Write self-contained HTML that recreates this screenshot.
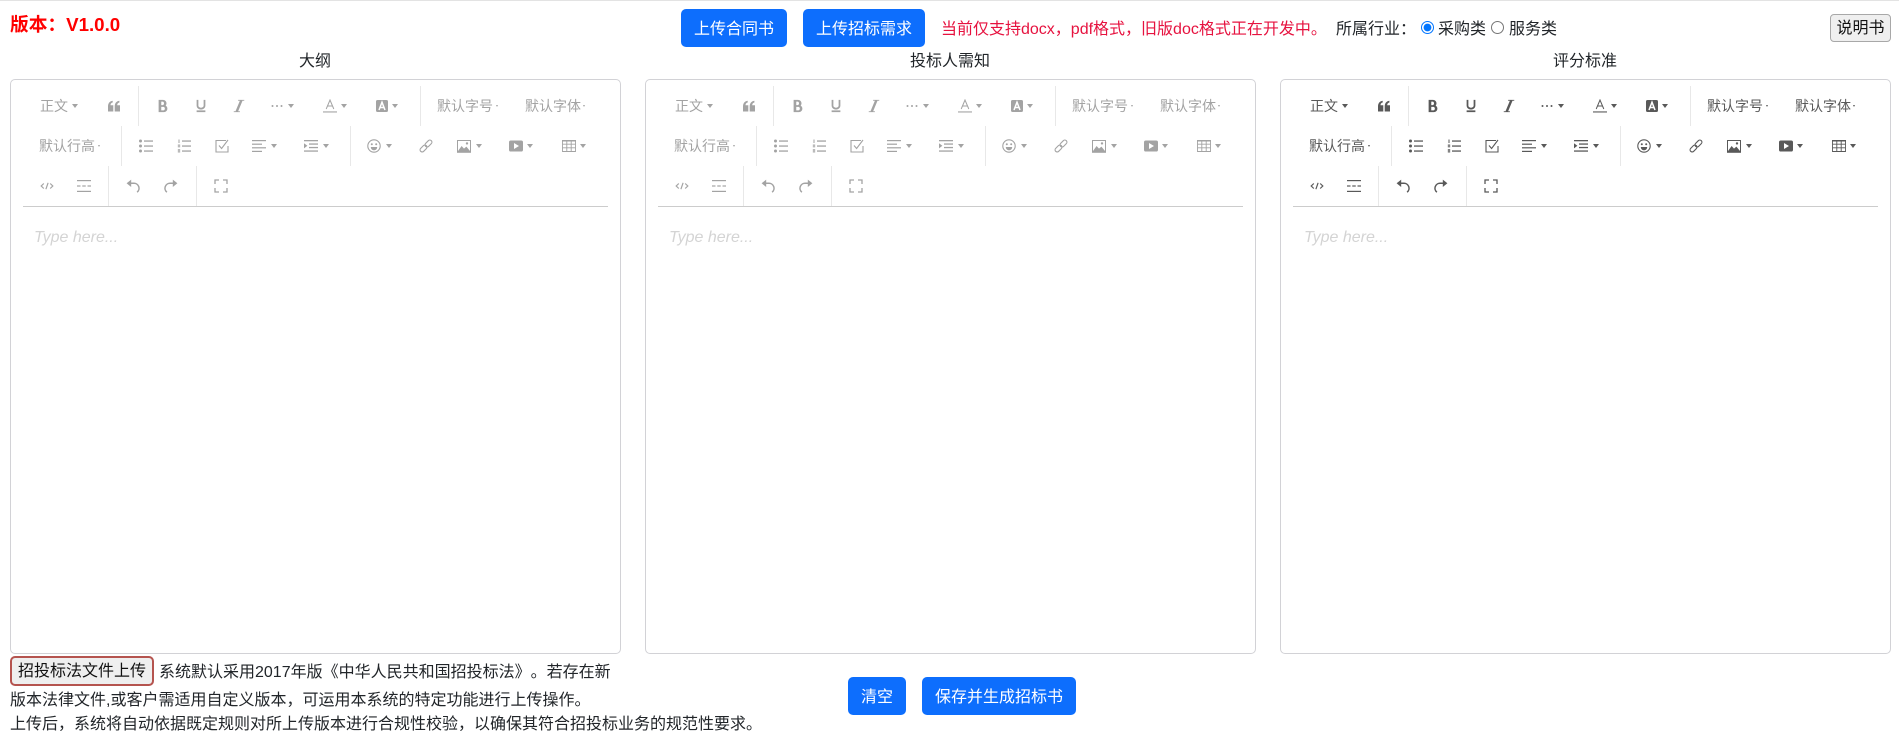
<!DOCTYPE html>
<html lang="zh-CN"><head><meta charset="utf-8"><title>招标书</title>
<style>
html,body{margin:0;padding:0;width:1899px;height:743px;overflow:hidden;background:#fff}
body{position:relative;font-family:"Liberation Sans","Noto Sans CJK SC",sans-serif;font-size:16px;color:#212529;text-spacing-trim:space-all}
.a{position:absolute;white-space:nowrap;line-height:24px}
.btn{position:absolute;height:38px;box-sizing:border-box;background:#0d6efd;border:1px solid #0d6efd;border-radius:5px;color:#fff;font:16px/24px "Liberation Sans","Noto Sans CJK SC",sans-serif;padding:8px 12px 4px;white-space:nowrap}
.nb{position:absolute;box-sizing:border-box;background:#efefef;font:16px/20px "Liberation Sans","Noto Sans CJK SC",sans-serif;color:#111;white-space:nowrap;padding:1px 0 0;text-align:center;text-spacing-trim:space-all}
.card{position:absolute;top:79px;width:611px;height:575px;color:#a3a3a3}
.card.on{color:#595959}
.bd{position:absolute;inset:0;border:1px solid #d2d2d6;border-radius:5px;box-sizing:border-box}
.line{position:absolute;left:13px;width:585px;top:127px;height:1px;background:#ccc}
.dv{position:absolute;width:1px;height:40px;background:#e8e8e8}
.d1{top:7px}.d2{top:47px}.d3{top:87px}
.t{position:absolute;font-size:14px;line-height:20px;white-space:nowrap}
.t1{top:17px}.t2{top:57px}
svg.i{position:absolute;width:14px;height:14px}
.r1{top:20px}.r2{top:60px}.r3{top:100px}
.c{position:absolute;width:0;height:0;border-left:3px solid transparent;border-right:3px solid transparent;border-top:4px solid currentColor}
.c1{top:25px}.c2{top:65px}
.o{position:absolute;width:0;height:0;border-left:1.5px solid transparent;border-right:1.5px solid transparent;border-top:2px solid currentColor}
.o1{top:26px}.o2{top:66px}
.ph{position:absolute;left:24px;top:147px;font-size:16px;line-height:24px;font-style:italic;color:#d4d4d4;white-space:nowrap}
input[type=radio]{position:absolute;margin:0;width:13px;height:13px}
</style></head><body>
<svg width="0" height="0" style="position:absolute"><defs>
<symbol id="q" viewBox="0 0 14 14"><path fill="currentColor" d="M1 12.5V7.5C1 4.500 2.500 2.300 5.700 1.800v1.700C4.100 3.900 3.500 5 3.500 6.300H6.300v6.200zM7.700 12.500V7.500c0-3 1.500-5.200 4.700-5.700v1.700c-1.600.4-2.200 1.500-2.200 2.800H13v6.200z"/></symbol>
<symbol id="b" viewBox="0 0 1024 1024"><path fill="currentColor" d="M707.872 484.64A254.88 254.88 0 0 0 768 320c0-141.152-114.848-256-256-256H192v896h384c141.152 0 256-114.848 256-256a256.096 256.096 0 0 0-124.128-219.36zM384 192h101.504c55.968 0 101.504 57.408 101.504 128s-45.536 128-101.504 128H384V192z m159.008 640H384v-256h159.008c58.464 0 106.016 57.408 106.016 128s-47.552 128-106.016 128z"/></symbol>
<symbol id="u" viewBox="0 0 1024 1024"><path fill="currentColor" d="M704 64l128 0 0 416c0 159.072-143.264 288-320 288s-320-128.928-320-288l0-416 128 0 0 416c0 40.16 18.24 78.688 51.36 108.512 36.896 33.216 86.848 51.488 140.64 51.488s103.744-18.304 140.64-51.488c33.12-29.792 51.36-68.352 51.36-108.512l0-416zM192 832l640 0 0 128-640 0z"/></symbol>
<symbol id="it" viewBox="0 0 1024 1024"><path fill="currentColor" d="M896 64v64h-128L448 896h128v64H128v-64h128L576 128h-128V64z"/></symbol>
<symbol id="m" viewBox="0 0 14 14"><g fill="currentColor"><circle cx="2.500" cy="7" r="1"/><circle cx="7" cy="7" r="1"/><circle cx="11.500" cy="7" r="1"/></g></symbol>
<symbol id="ca" viewBox="0 0 14 14"><path fill="none" stroke="currentColor" stroke-width="1" d="M3.200 10L7 1l3.800 9M4.500 7h5"/><rect x="0" y="12.400" width="14" height="1.100" fill="currentColor"/></symbol>
<symbol id="ba" viewBox="0 0 14 14"><rect x="1" y="1" width="12" height="12" rx="1.600" fill="currentColor"/><path fill="none" stroke="#fff" stroke-width="1.500" d="M4 11L7 3.200 10 11M5 8.500h4"/></symbol>
<symbol id="l" viewBox="0 0 14 14"><g fill="currentColor"><circle cx="1.500" cy="2" r="1.500"/><circle cx="1.500" cy="7" r="1.500"/><circle cx="1.500" cy="12" r="1.500"/><rect x="5" y="1.400" width="9" height="1.300"/><rect x="5" y="6.400" width="9" height="1.300"/><rect x="5" y="11.400" width="9" height="1.300"/></g></symbol>
<symbol id="n" viewBox="0 0 14 14"><g fill="currentColor"><rect x="1.500" y=".5" width="1" height="3.500"/><rect x=".8" y="5.400" width="2.400" height="3" opacity=".75"/><rect x=".8" y="10" width="2.400" height="3.600" opacity=".75"/><rect x="5" y="1.400" width="9" height="1.300"/><rect x="5" y="6.400" width="9" height="1.300"/><rect x="5" y="11.400" width="9" height="1.300"/></g></symbol>
<symbol id="td" viewBox="0 0 14 14"><path fill="none" stroke="currentColor" stroke-width="1.100" d="M13 7v6H1V1.500h10M4 6.500l2.600 3L13 1"/></symbol>
<symbol id="al" viewBox="0 0 14 14"><g fill="currentColor"><rect y="1" width="14" height="1.200"/><rect y="4.600" width="10" height="1.200"/><rect y="8.200" width="14" height="1.200"/><rect y="11.800" width="10" height="1.200"/></g></symbol>
<symbol id="id" viewBox="0 0 14 14"><g fill="currentColor"><rect y="1" width="14" height="1.300"/><rect x="5" y="4.400" width="9" height="1.300"/><rect x="5" y="7.900" width="9" height="1.300"/><rect y="11.400" width="14" height="1.300"/><path d="M0 4.200l3.400 2.600L0 9.400z"/></g></symbol>
<symbol id="s" viewBox="0 0 14 14"><circle cx="7" cy="7" r="6.200" fill="none" stroke="currentColor" stroke-width="1.100"/><g fill="currentColor"><circle cx="4.800" cy="5.300" r="1"/><circle cx="9.200" cy="5.300" r="1"/><path d="M3.800 8h6.400c0 1.900-1.400 3.300-3.200 3.300S3.800 9.900 3.800 8z"/></g></symbol>
<symbol id="ln" viewBox="0 0 14 14"><g fill="none" stroke="currentColor" stroke-width="1.100" transform="rotate(-45 7 7)"><rect x="-.5" y="4.900" width="8" height="4.200" rx="2.100"/><rect x="6.500" y="4.900" width="8" height="4.200" rx="2.100"/></g></symbol>
<symbol id="im" viewBox="0 0 14 14"><path fill="none" stroke="currentColor" stroke-width="1" d="M.5 1.500h13v11H.5z"/><path fill="currentColor" d="M1 12l3.600-5 2.400 2.600 2.400-2 3.600 4.400z"/><circle cx="10" cy="4.400" r="1.200" fill="currentColor"/><rect y="12.800" width="14" height="1" fill="currentColor"/></symbol>
<symbol id="v" viewBox="0 0 14 14"><rect y="1.500" width="14" height="11" rx="1.800" fill="currentColor"/><path fill="#fff" d="M5 4l5 3-5 3z"/></symbol>
<symbol id="tb" viewBox="0 0 14 14"><path fill="none" stroke="currentColor" stroke-width=".9" d="M.5 1.500h13v11H.5zM.5 5.200h13M.5 8.800h13M4.800 1.500v11M9.200 1.500v11"/><rect y="1" width="14" height="1.500" fill="currentColor"/></symbol>
<symbol id="cd" viewBox="0 0 14 14"><path fill="none" stroke="currentColor" stroke-width="1.200" d="M3.800 4.500L1.200 7l2.600 2.500M10.200 4.500L12.800 7l-2.600 2.500M8.100 3.800L5.900 10.200"/></symbol>
<symbol id="hr" viewBox="0 0 14 14"><g fill="currentColor"><rect y="1" width="14" height="1.200"/><rect y="11.800" width="14" height="1.200"/><rect y="6.400" width="3.500" height="1.200"/><rect x="5.250" y="6.400" width="3.500" height="1.200"/><rect x="10.500" y="6.400" width="3.500" height="1.200"/></g></symbol>
<symbol id="un" viewBox="0 0 14 14"><path fill="none" stroke="currentColor" stroke-width="1.500" d="M3 4.300h4.500a5 5 0 0 1 3.600 8.900"/><path fill="currentColor" d="M5.200.6v7.400L.6 4.300z"/></symbol>
<symbol id="re" viewBox="0 0 14 14"><g transform="matrix(-1 0 0 1 14 0)"><path fill="none" stroke="currentColor" stroke-width="1.500" d="M3 4.300h4.500a5 5 0 0 1 3.600 8.900"/><path fill="currentColor" d="M5.200.6v7.400L.6 4.300z"/></g></symbol>
<symbol id="fs" viewBox="0 0 14 14"><path fill="none" stroke="currentColor" stroke-width="1.300" d="M1 5V1h4M9 1h4v4M13 9v4H9M5 13H1V9"/></symbol>
</defs></svg>

<div style="position:absolute;left:0;top:0;width:1899px;height:1px;background:#e3e3e3"></div>
<div class="a" style="left:10px;top:13px;color:#f00;font-weight:bold;font-size:18.720px">版本：V1.0.0</div>
<button class="btn" style="left:681px;top:9px;width:106px">上传合同书</button>
<button class="btn" style="left:803px;top:9px;width:122px">上传招标需求</button>
<div class="a" style="left:941px;top:18px;color:#e6123f">当前仅支持docx，pdf格式，旧版doc格式正在开发中。</div>
<div class="a" style="left:1336px;top:18px">所属行业：</div>
<input type="radio" name="k" checked style="left:1421px;top:21px">
<div class="a" style="left:1438px;top:18px">采购类</div>
<input type="radio" name="k" style="left:1491px;top:21px">
<div class="a" style="left:1509px;top:18px">服务类</div>
<button class="nb" style="left:1830px;top:14px;width:61px;height:28px;border:1px solid #a8a8a8;border-radius:4px">说明书</button>

<div class="a" style="left:299px;top:50px">大纲</div>
<div class="a" style="left:910px;top:50px">投标人需知</div>
<div class="a" style="left:1553px;top:50px">评分标准</div>

<div class="card" style="left:10px"><div class="bd"></div>
<span class="t t1" style="left:30px">正文</span><i class="c c1" style="left:62px"></i><svg class="i r1" style="left:97px"><use href="#q"/></svg><div class="dv d1" style="left:128px"></div>
<svg class="i r1" style="left:146px"><use href="#b"/></svg><svg class="i r1" style="left:184px"><use href="#u"/></svg><svg class="i r1" style="left:222px"><use href="#it"/></svg><svg class="i r1" style="left:260px"><use href="#m"/></svg><i class="c c1" style="left:278px"></i>
<svg class="i r1" style="left:313px"><use href="#ca"/></svg><i class="c c1" style="left:331px"></i><svg class="i r1" style="left:365px"><use href="#ba"/></svg><i class="c c1" style="left:382px"></i><div class="dv d1" style="left:410px"></div>
<span class="t t1" style="left:427px">默认字号</span><i class="o o1" style="left:486px"></i><span class="t t1" style="left:515px">默认字体</span><i class="o o1" style="left:573px"></i>
<span class="t t2" style="left:29px">默认行高</span><i class="o o2" style="left:88px"></i><div class="dv d2" style="left:111px"></div>
<svg class="i r2" style="left:129px"><use href="#l"/></svg><svg class="i r2" style="left:167px"><use href="#n"/></svg><svg class="i r2" style="left:205px"><use href="#td"/></svg><svg class="i r2" style="left:242px"><use href="#al"/></svg><i class="c c2" style="left:261px"></i><svg class="i r2" style="left:294px"><use href="#id"/></svg><i class="c c2" style="left:313px"></i><div class="dv d2" style="left:340px"></div>
<svg class="i r2" style="left:357px"><use href="#s"/></svg><i class="c c2" style="left:376px"></i><svg class="i r2" style="left:409px"><use href="#ln"/></svg><svg class="i r2" style="left:447px"><use href="#im"/></svg><i class="c c2" style="left:466px"></i><svg class="i r2" style="left:499px"><use href="#v"/></svg><i class="c c2" style="left:517px"></i><svg class="i r2" style="left:552px"><use href="#tb"/></svg><i class="c c2" style="left:570px"></i>
<svg class="i r3" style="left:30px"><use href="#cd"/></svg><svg class="i r3" style="left:67px"><use href="#hr"/></svg><div class="dv d3" style="left:98px"></div><svg class="i r3" style="left:116px"><use href="#un"/></svg><svg class="i r3" style="left:154px"><use href="#re"/></svg><div class="dv d3" style="left:186px"></div><svg class="i r3" style="left:204px"><use href="#fs"/></svg>
<div class="line"></div><div class="ph">Type here...</div></div>

<div class="card" style="left:645px"><div class="bd"></div>
<span class="t t1" style="left:30px">正文</span><i class="c c1" style="left:62px"></i><svg class="i r1" style="left:97px"><use href="#q"/></svg><div class="dv d1" style="left:128px"></div>
<svg class="i r1" style="left:146px"><use href="#b"/></svg><svg class="i r1" style="left:184px"><use href="#u"/></svg><svg class="i r1" style="left:222px"><use href="#it"/></svg><svg class="i r1" style="left:260px"><use href="#m"/></svg><i class="c c1" style="left:278px"></i>
<svg class="i r1" style="left:313px"><use href="#ca"/></svg><i class="c c1" style="left:331px"></i><svg class="i r1" style="left:365px"><use href="#ba"/></svg><i class="c c1" style="left:382px"></i><div class="dv d1" style="left:410px"></div>
<span class="t t1" style="left:427px">默认字号</span><i class="o o1" style="left:486px"></i><span class="t t1" style="left:515px">默认字体</span><i class="o o1" style="left:573px"></i>
<span class="t t2" style="left:29px">默认行高</span><i class="o o2" style="left:88px"></i><div class="dv d2" style="left:111px"></div>
<svg class="i r2" style="left:129px"><use href="#l"/></svg><svg class="i r2" style="left:167px"><use href="#n"/></svg><svg class="i r2" style="left:205px"><use href="#td"/></svg><svg class="i r2" style="left:242px"><use href="#al"/></svg><i class="c c2" style="left:261px"></i><svg class="i r2" style="left:294px"><use href="#id"/></svg><i class="c c2" style="left:313px"></i><div class="dv d2" style="left:340px"></div>
<svg class="i r2" style="left:357px"><use href="#s"/></svg><i class="c c2" style="left:376px"></i><svg class="i r2" style="left:409px"><use href="#ln"/></svg><svg class="i r2" style="left:447px"><use href="#im"/></svg><i class="c c2" style="left:466px"></i><svg class="i r2" style="left:499px"><use href="#v"/></svg><i class="c c2" style="left:517px"></i><svg class="i r2" style="left:552px"><use href="#tb"/></svg><i class="c c2" style="left:570px"></i>
<svg class="i r3" style="left:30px"><use href="#cd"/></svg><svg class="i r3" style="left:67px"><use href="#hr"/></svg><div class="dv d3" style="left:98px"></div><svg class="i r3" style="left:116px"><use href="#un"/></svg><svg class="i r3" style="left:154px"><use href="#re"/></svg><div class="dv d3" style="left:186px"></div><svg class="i r3" style="left:204px"><use href="#fs"/></svg>
<div class="line"></div><div class="ph">Type here...</div></div>

<div class="card on" style="left:1280px"><div class="bd"></div>
<span class="t t1" style="left:30px">正文</span><i class="c c1" style="left:62px"></i><svg class="i r1" style="left:97px"><use href="#q"/></svg><div class="dv d1" style="left:128px"></div>
<svg class="i r1" style="left:146px"><use href="#b"/></svg><svg class="i r1" style="left:184px"><use href="#u"/></svg><svg class="i r1" style="left:222px"><use href="#it"/></svg><svg class="i r1" style="left:260px"><use href="#m"/></svg><i class="c c1" style="left:278px"></i>
<svg class="i r1" style="left:313px"><use href="#ca"/></svg><i class="c c1" style="left:331px"></i><svg class="i r1" style="left:365px"><use href="#ba"/></svg><i class="c c1" style="left:382px"></i><div class="dv d1" style="left:410px"></div>
<span class="t t1" style="left:427px">默认字号</span><i class="o o1" style="left:486px"></i><span class="t t1" style="left:515px">默认字体</span><i class="o o1" style="left:573px"></i>
<span class="t t2" style="left:29px">默认行高</span><i class="o o2" style="left:88px"></i><div class="dv d2" style="left:111px"></div>
<svg class="i r2" style="left:129px"><use href="#l"/></svg><svg class="i r2" style="left:167px"><use href="#n"/></svg><svg class="i r2" style="left:205px"><use href="#td"/></svg><svg class="i r2" style="left:242px"><use href="#al"/></svg><i class="c c2" style="left:261px"></i><svg class="i r2" style="left:294px"><use href="#id"/></svg><i class="c c2" style="left:313px"></i><div class="dv d2" style="left:340px"></div>
<svg class="i r2" style="left:357px"><use href="#s"/></svg><i class="c c2" style="left:376px"></i><svg class="i r2" style="left:409px"><use href="#ln"/></svg><svg class="i r2" style="left:447px"><use href="#im"/></svg><i class="c c2" style="left:466px"></i><svg class="i r2" style="left:499px"><use href="#v"/></svg><i class="c c2" style="left:517px"></i><svg class="i r2" style="left:552px"><use href="#tb"/></svg><i class="c c2" style="left:570px"></i>
<svg class="i r3" style="left:30px"><use href="#cd"/></svg><svg class="i r3" style="left:67px"><use href="#hr"/></svg><div class="dv d3" style="left:98px"></div><svg class="i r3" style="left:116px"><use href="#un"/></svg><svg class="i r3" style="left:154px"><use href="#re"/></svg><div class="dv d3" style="left:186px"></div><svg class="i r3" style="left:204px"><use href="#fs"/></svg>
<div class="line"></div><div class="ph">Type here...</div></div>

<button class="nb" style="left:10px;top:656px;width:144px;height:30px;border:2px solid #b5544f;border-radius:5px">招投标法文件上传</button>
<div class="a" style="left:159px;top:661px">系统默认采用2017年版《中华人民共和国招投标法》。若存在新</div>
<div class="a" style="left:10px;top:689px">版本法律文件,或客户需适用自定义版本，可运用本系统的特定功能进行上传操作。</div>
<div class="a" style="left:10px;top:713px">上传后，系统将自动依据既定规则对所上传版本进行合规性校验，以确保其符合招投标业务的规范性要求。</div>
<button class="btn" style="left:848px;top:677px;width:58px">清空</button>
<button class="btn" style="left:922px;top:677px;width:154px">保存并生成招标书</button>
</body></html>
